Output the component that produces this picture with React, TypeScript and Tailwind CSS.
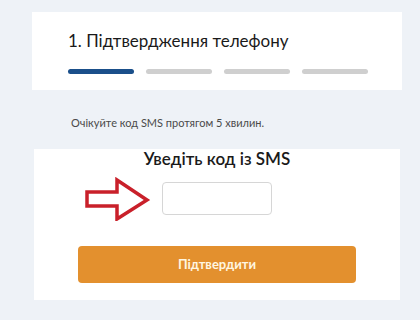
export default function App() {
  return (
    <div className="w-[420px] h-[320px] overflow-hidden bg-[#eef2f7] font-['Lato','Noto_Sans',sans-serif] text-[#1b1b1b]">
      {/* Step header */}
      <div className="ml-[32px] mt-[12px] w-[370px] h-[78px] bg-white pl-[36px] pt-[19px]">
        <h1 className="text-[17px] leading-[20px] font-normal text-[#1a1a1a]">
          1. Підтвердження телефону
        </h1>
        <div className="mt-[18px] flex gap-[12px]">
          <div className="w-[66px] h-[5px] rounded-full bg-[#1a4f8a]" />
          <div className="w-[66px] h-[5px] rounded-full bg-[#cfcfcf]" />
          <div className="w-[66px] h-[5px] rounded-full bg-[#cfcfcf]" />
          <div className="w-[66px] h-[5px] rounded-full bg-[#cfcfcf]" />
        </div>
      </div>

      <p className="ml-[71px] mt-[26px] text-[11px] leading-[14px] text-[#4a4a4a]">
        Очікуйте код SMS протягом 5 хвилин.
      </p>

      {/* Code form */}
      <div className="ml-[34px] mt-[19px] w-[366px] h-[151px] bg-white flex flex-col items-center">
        <h2 className="text-[17px] leading-[20px] font-semibold text-[#1a1a1a]">
          Уведіть код із SMS
        </h2>
        <div className="relative mt-[13px]">
          <svg
            className="absolute left-[-77px] top-[-5px]"
            width="66"
            height="44"
            viewBox="0 0 66 44"
            fill="none"
          >
            <path
              d="M2 15 H32 V3 L62 23 L32 42 V29 H2 Z"
              fill="#ffffff"
              stroke="#c9202a"
              strokeWidth="3.5"
              strokeLinejoin="miter"
            />
          </svg>
          <input
            type="text"
            className="block w-[110px] h-[33px] rounded-[4px] border border-[#d6d6d6] bg-white outline-none"
          />
        </div>
        <button className="mt-[31px] w-[278px] h-[37px] rounded-[4px] bg-[#e3902e] text-[13px] font-bold text-[#fff6e0]">
          Підтвердити
        </button>
      </div>
    </div>
  );
}
